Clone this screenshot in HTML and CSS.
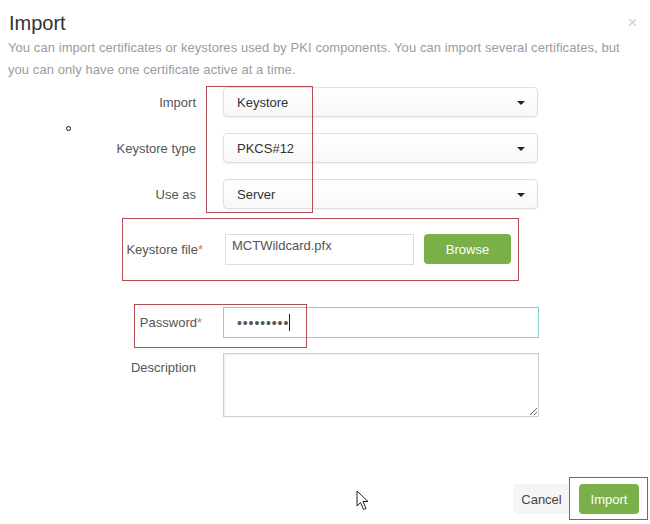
FILE: index.html
```html
<!DOCTYPE html>
<html lang="en">
<head>
    <meta charset="UTF-8">
    <title>Import</title>
    <link rel="stylesheet" href="styles.css">
</head>
<body>
<div class="modal">
    <div class="modal-header">
        <h2 class="modal-title">Import</h2>
        <span class="close">&times;</span>
    </div>
    <p class="intro">You can import certificates or keystores used by PKI components. You can import several certificates, but you can only have one certificate active at a time.</p>

    <div class="form">
        <div class="row row-select">
            <label class="label">Import</label>
            <div class="select">Keystore<span class="caret"></span></div>
        </div>
        <div class="row row-select">
            <label class="label">Keystore type</label>
            <div class="select">PKCS#12<span class="caret"></span></div>
        </div>
        <div class="row row-select">
            <label class="label">Use as</label>
            <div class="select">Server<span class="caret"></span></div>
        </div>

        <div class="row row-file">
            <label class="label label-req">Keystore file<span class="req">*</span></label>
            <div class="file-input">MCTWildcard.pfx</div>
            <button class="btn btn-green btn-browse">Browse</button>
        </div>

        <div class="row row-password">
            <label class="label label-req">Password<span class="req">*</span></label>
            <div class="text-input focused"><span class="dots">&bull;&bull;&bull;&bull;&bull;&bull;&bull;&bull;&bull;</span><span class="text-caret"></span></div>
        </div>

        <div class="row row-desc">
            <label class="label">Description</label>
            <textarea class="textarea"></textarea>
        </div>
    </div>

    <div class="footer">
        <button class="btn btn-cancel">Cancel</button>
        <button class="btn btn-green btn-import">Import</button>
    </div>

    <!-- annotation boxes drawn over the dialog -->
    <div class="mark mark-selects"></div>
    <div class="mark mark-file"></div>
    <div class="mark mark-password"></div>
    <div class="mark mark-import"></div>

    <span class="dot"></span>
    <svg class="pointer" width="13" height="21" viewBox="0 0 13 21">
        <path d="M1 1 L1 16 L4.5 12.5 L7.5 19.5 L10 18.5 L7 11.5 L12 11.5 Z" fill="#fff" stroke="#222" stroke-width="1" stroke-linejoin="round"/>
    </svg>
</div>
</body>
</html>
```

FILE: styles.css
```css
body {
    margin: 0;
    background: #fff;
    font-family: "Liberation Sans", Arial, sans-serif;
    font-size: 13px;
    color: #555;
}

.modal {
    position: relative;
    width: 650px;
    height: 524px;
    overflow: hidden;
}

.modal-header {
    display: flex;
    justify-content: space-between;
    align-items: flex-start;
    padding: 10px 13px 0 9px;
}

.modal-title {
    margin: 0;
    font-size: 20px;
    font-weight: normal;
    line-height: 26px;
    color: #333;
}

.close {
    font-size: 16px;
    line-height: 26px;
    color: #cfcfcf;
}

.intro {
    margin: 1px 0 0 8px;
    width: 630px;
    line-height: 22px;
    letter-spacing: 0.07px;
    color: #9c9c9c;
}

.form {
    margin-top: 6px;
}

.row {
    display: flex;
    align-items: center;
}

.label {
    box-sizing: border-box;
    width: 223px;
    padding-right: 27px;
    text-align: right;
    color: #555;
}

.label-req {
    padding-right: 21px;
}

.req {
    color: #e2722f;
}

/* selects */
.row-select + .row-select {
    margin-top: 16px;
}

.select {
    box-sizing: border-box;
    position: relative;
    display: flex;
    align-items: center;
    width: 315px;
    height: 30px;
    padding-left: 13px;
    border: 1px solid #dedede;
    border-radius: 4px;
    background: linear-gradient(#fff, #f8f8f8);
    box-shadow: 0 1px 2px rgba(0, 0, 0, 0.06);
    color: #333;
}

.caret {
    position: absolute;
    right: 12px;
    top: 13px;
    border-left: 4px solid transparent;
    border-right: 4px solid transparent;
    border-top: 4px solid #222;
}

/* keystore file */
.row-file {
    margin-top: 25px;
    align-items: flex-start;
}

.row-file .label {
    width: 225px;
    padding-top: 8px;
    padding-right: 22px;
}

.file-input {
    box-sizing: border-box;
    width: 189px;
    height: 31px;
    padding: 3px 6px;
    border: 1px solid #ddd;
    color: #555;
}

.btn {
    font-family: inherit;
    font-size: 13px;
    border: none;
    border-radius: 4px;
    height: 30px;
    padding: 0;
}

.btn-green {
    background: #7aaf49;
    color: #fff;
}

.btn-browse {
    width: 87px;
    margin-left: 10px;
}

/* password */
.row-password {
    margin-top: 42px;
}

.text-input {
    box-sizing: border-box;
    display: flex;
    align-items: center;
    width: 316px;
    height: 31px;
    padding-left: 13px;
    border: 1px solid #ddd;
}

.text-input.focused {
    border-color: #86d2d2;
    box-shadow: inset 0 0 1px #a9e2e2;
}

.dots {
    color: #555;
    font-size: 14px;
    letter-spacing: 0.9px;
}

.text-caret {
    width: 1px;
    height: 17px;
    background: #222;
}

/* description */
.row-desc {
    margin-top: 15px;
    align-items: flex-start;
}

.row-desc .label {
    padding-top: 7px;
}

.textarea {
    box-sizing: border-box;
    width: 316px;
    height: 64px;
    margin: 0;
    border: 1px solid #cfcfcf;
    box-shadow: inset 1px 1px 2px rgba(0, 0, 0, 0.08);
    font-family: inherit;
}

/* footer */
.footer {
    display: flex;
    justify-content: flex-end;
    gap: 9px;
    margin-top: 67px;
    padding-right: 11px;
}

.btn-cancel {
    width: 57px;
    background: #f5f5f5;
    color: #444;
}

.btn-import {
    width: 60px;
}

/* red annotation boxes */
.mark {
    position: absolute;
    border: 1px solid #b34d55;
}

.mark-selects {
    left: 206px;
    top: 86px;
    width: 105px;
    height: 125px;
}

.mark-file {
    left: 122px;
    top: 218px;
    width: 395px;
    height: 61px;
}

.mark-password {
    left: 134px;
    top: 304px;
    width: 171px;
    height: 42px;
}

.mark-import {
    left: 569px;
    top: 477px;
    width: 77px;
    height: 41px;
}

.dot {
    position: absolute;
    left: 66px;
    top: 126px;
    width: 3px;
    height: 3px;
    border: 1px solid #111;
    border-radius: 50%;
}

.pointer {
    position: absolute;
    left: 356px;
    top: 490px;
}
```
